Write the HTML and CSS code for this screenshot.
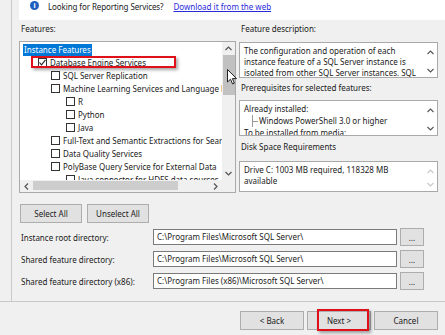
FILE: index.html
```html
<html>
<head>
    <title>Feature Selection</title>
    <link rel="stylesheet" href="styles.css">
</head>
<body>
    <div class="frame">
        <div class="content">
            <!-- Reporting services banner -->
            <div class="banner">
                <span class="info">i</span>
                <span class="banner-text">Looking for Reporting Services?</span>
                <a class="link">Download it from the web</a>
            </div>

            <div class="columns">
                <!-- Feature tree -->
                <div class="left">
                    <div class="label">Features:</div>
                    <div class="tree box">
                        <div class="tree-body">
                            <div class="row"><span class="sel">Instance Features</span></div>
                            <div class="row lvl1"><span class="cb checked"><svg width="7" height="7" viewBox="0 0 7 7"><polyline points="0.5,3.5 2.5,5.8 6.5,0.8" fill="none" stroke="#222" stroke-width="1.1"/></svg></span>Database Engine Services</div>
                            <div class="row lvl2"><span class="cb"></span>SQL Server Replication</div>
                            <div class="row lvl2"><span class="cb"></span>Machine Learning Services and Language Extensions</div>
                            <div class="row lvl3"><span class="cb"></span>R</div>
                            <div class="row lvl3"><span class="cb"></span>Python</div>
                            <div class="row lvl3"><span class="cb"></span>Java</div>
                            <div class="row lvl2"><span class="cb"></span>Full-Text and Semantic Extractions for Search</div>
                            <div class="row lvl2"><span class="cb"></span>Data Quality Services</div>
                            <div class="row lvl2"><span class="cb"></span>PolyBase Query Service for External Data</div>
                            <div class="row lvl3"><span class="cb"></span>Java connector for HDFS data sources</div>
                        </div>
                        <div class="vscroll">
                            <span class="arrow"><svg width="7" height="5" viewBox="0 0 7 5"><polyline points="0.5,4 3.5,1 6.5,4" fill="none" stroke="#555" stroke-width="1.2"/></svg></span>
                            <div class="vthumb"></div>
                            <span class="arrow bottom"><svg width="7" height="5" viewBox="0 0 7 5"><polyline points="0.5,1 3.5,4 6.5,1" fill="none" stroke="#555" stroke-width="1.2"/></svg></span>
                        </div>
                        <div class="hscroll">
                            <span class="harrow"><svg width="5" height="7" viewBox="0 0 5 7"><polyline points="4,0.5 1,3.5 4,6.5" fill="none" stroke="#555" stroke-width="1.2"/></svg></span>
                            <div class="hthumb"></div>
                            <span class="harrow"><svg width="5" height="7" viewBox="0 0 5 7"><polyline points="1,0.5 4,3.5 1,6.5" fill="none" stroke="#555" stroke-width="1.2"/></svg></span>
                        </div>
                        <div class="corner"></div>
                    </div>
                </div>

                <!-- Description panels -->
                <div class="right">
                    <div class="label">Feature description:</div>
                    <div class="box info-box desc">
                        <div class="box-text">The configuration and operation of each<br>instance feature of a SQL Server instance is<br>isolated from other SQL Server instances. SQL</div>
                        <div class="mini-scroll">
                            <svg width="7" height="5" viewBox="0 0 7 5"><polyline points="0.5,4 3.5,1 6.5,4" fill="none" stroke="#555" stroke-width="1.1"/></svg>
                            <svg width="7" height="5" viewBox="0 0 7 5"><polyline points="0.5,1 3.5,4 6.5,1" fill="none" stroke="#555" stroke-width="1.1"/></svg>
                        </div>
                    </div>
                    <div class="label mid">Prerequisites for selected features:</div>
                    <div class="box info-box prereq">
                        <div class="box-text">
                            <div>Already installed:</div>
                            <div class="branch">Windows PowerShell 3.0 or higher</div>
                            <div>To be installed from media:</div>
                        </div>
                        <div class="mini-scroll">
                            <svg width="7" height="5" viewBox="0 0 7 5"><polyline points="0.5,4 3.5,1 6.5,4" fill="none" stroke="#555" stroke-width="1.1"/></svg>
                            <svg width="7" height="5" viewBox="0 0 7 5"><polyline points="0.5,1 3.5,4 6.5,1" fill="none" stroke="#555" stroke-width="1.1"/></svg>
                        </div>
                    </div>
                    <div class="label disk-label">Disk Space Requirements</div>
                    <div class="box info-box disk">
                        <div class="box-text">Drive C: 1003 MB required, 118328 MB<br>available</div>
                        <div class="mini-scroll">
                            <svg width="7" height="5" viewBox="0 0 7 5"><polyline points="0.5,4 3.5,1 6.5,4" fill="none" stroke="#c8c8c8" stroke-width="1.1"/></svg>
                            <svg width="7" height="5" viewBox="0 0 7 5"><polyline points="0.5,1 3.5,4 6.5,1" fill="none" stroke="#c8c8c8" stroke-width="1.1"/></svg>
                        </div>
                    </div>
                </div>
            </div>

            <div class="select-buttons">
                <button>Select All</button>
                <button>Unselect All</button>
            </div>

            <!-- Directories -->
            <div class="dirs">
                <label>Instance root directory:</label>
                <div class="field">C:\Program Files\Microsoft SQL Server\</div>
                <button class="browse">...</button>
                <label>Shared feature directory:</label>
                <div class="field">C:\Program Files\Microsoft SQL Server\</div>
                <button class="browse">...</button>
                <label>Shared feature directory (x86):</label>
                <div class="field">C:\Program Files (x86)\Microsoft SQL Server\</div>
                <button class="browse">...</button>
            </div>
        </div>
    </div>

    <div class="footer">
        <button>&lt; Back</button>
        <button>Next &gt;</button>
        <button>Cancel</button>
    </div>

    <!-- Annotations -->
    <div class="mark mark-engine"></div>
    <div class="mark mark-next"></div>
    <svg class="cursor" width="11" height="17" viewBox="0 0 11 17"><path d="M0.5,0.5 L0.5,13 L3.5,10.2 L5.6,15 L7.4,14.2 L5.4,9.6 L9.5,9.6 Z" fill="#fff" stroke="#222" stroke-width="1"/></svg>
</body>
</html>
```

FILE: styles.css
```css
body {
    margin: 0;
    width: 445px;
    height: 335px;
    overflow: hidden;
    background-color: #f0f0f0;
    font-family: 'Noto Sans', sans-serif;
    font-size: 8px;
    color: #1a1a1a;
    position: relative;
}

.frame {
    height: 302px;
    box-sizing: border-box;
    padding-left: 11px;
    border-bottom: 1px solid #c9c9c9;
}

.content {
    height: 100%;
    border-left: 1px solid #c9c9c9;
    padding-left: 7px;
    padding-right: 7px;
}

.banner {
    height: 20px;
    margin-right: -7px;
    background-color: #ffffff;
    display: flex;
    align-items: flex-start;
    padding-top: 1px;
    box-sizing: border-box;
}

.info {
    width: 9px;
    height: 9px;
    margin-left: 11px;
    border-radius: 50%;
    background-color: #1f5fbf;
    color: #ffffff;
    font-weight: bold;
    font-size: 7px;
    line-height: 9px;
    text-align: center;
}

.banner-text {
    margin-left: 9px;
    line-height: 11px;
    letter-spacing: -0.1px;
}

.link {
    margin-left: 10px;
    line-height: 11px;
    color: #2b2bd9;
    text-decoration: underline;
}

.columns {
    display: grid;
    grid-template-columns: 217px 199px;
    gap: 3px;
}

.label {
    height: 12px;
    line-height: 12px;
    padding-top: 3px;
    margin-bottom: 6px;
    padding-left: 2px;
}

.right .label {
    margin-bottom: 7px;
}

.box {
    border: 1px solid #a9a9a9;
    background-color: #ffffff;
    box-sizing: border-box;
}

/* Tree */
.tree {
    height: 152px;
    display: grid;
    grid-template-columns: 1fr 13px;
    grid-template-rows: 1fr 12px;
}

.tree-body {
    overflow: hidden;
    white-space: nowrap;
    padding-top: 1px;
    padding-left: 3px;
}

.row {
    height: 13px;
    line-height: 12px;
    display: flex;
    align-items: center;
}

.sel {
    background-color: #0078d7;
    color: #ffffff;
    padding: 0 1px;
    height: 12px;
}

.lvl1 { padding-left: 15px; }
.lvl2 { padding-left: 28px; }
.lvl3 { padding-left: 43px; }

.cb {
    width: 7px;
    height: 7px;
    border: 1px solid #333333;
    background-color: #ffffff;
    margin-right: 3px;
    flex: none;
    display: flex;
    align-items: center;
    justify-content: center;
}

.vscroll {
    background-color: #f0f0f0;
    display: flex;
    flex-direction: column;
    align-items: center;
}

.arrow {
    height: 13px;
    display: flex;
    align-items: center;
}

.arrow.bottom {
    margin-top: auto;
}

.vthumb {
    width: 12px;
    height: 40px;
    background-color: #c1c1c1;
}

.hscroll {
    background-color: #f0f0f0;
    display: flex;
    align-items: center;
}

.harrow {
    width: 13px;
    display: flex;
    justify-content: center;
}

.hthumb {
    width: 145px;
    height: 9px;
    margin-top: -2px;
    background-color: #cdcdcd;
}

.hthumb + .harrow {
    margin-left: auto;
}

.corner {
    background-color: #f0f0f0;
}

/* Info boxes */
.info-box {
    display: flex;
    overflow: hidden;
}

.box-text {
    flex: 1;
    padding: 2px 0 0 4px;
    line-height: 11px;
    white-space: nowrap;
    overflow: hidden;
}

.desc { height: 36px; }
.prereq { height: 36px; }
.disk { height: 31px; }

.prereq .box-text {
    line-height: 12px;
    padding-top: 2px;
}

.branch {
    margin-left: 8px;
    padding-left: 6px;
    border-left: 1px solid #999999;
    position: relative;
}

.branch::before {
    content: "";
    position: absolute;
    left: 0;
    top: 6px;
    width: 5px;
    border-top: 1px solid #999999;
}

.mini-scroll {
    width: 13px;
    display: flex;
    flex-direction: column;
    justify-content: space-between;
    align-items: center;
    padding: 7px 0 4px;
}

.right .label.mid {
    padding-top: 4px;
    margin-bottom: 6px;
}

.right .label.disk-label {
    padding-top: 5px;
    margin-bottom: 8px;
}

/* Buttons */
button {
    font-family: 'Noto Sans', sans-serif;
    font-size: 8px;
    color: #1a1a1a;
    background-color: #e1e1e1;
    border: 1px solid #adadad;
    height: 19px;
    padding: 0;
    margin: 0;
}

.select-buttons {
    display: flex;
    gap: 5px;
    margin-top: 11px;
    margin-left: 1px;
}

.select-buttons button {
    width: 62px;
}

.dirs {
    display: grid;
    grid-template-columns: 131px 244px 24px;
    column-gap: 3px;
    row-gap: 4px;
    margin-top: 5px;
    align-items: center;
}

.dirs label {
    padding-left: 2px;
}

.field {
    height: 16px;
    line-height: 14px;
    box-sizing: border-box;
    border: 1px solid #7a7a7a;
    background-color: #ffffff;
    padding-left: 3px;
    white-space: nowrap;
    overflow: hidden;
}

.browse {
    height: 18px;
}

.footer {
    display: flex;
    justify-content: flex-end;
    gap: 3px;
    padding: 9px 7px 0 0;
}

.footer button {
    width: 64px;
}

/* Annotations drawn over the screenshot */
.mark {
    position: absolute;
    border: 2px solid #e0101a;
    box-shadow: 2px 2px 3px rgba(0, 0, 0, 0.35);
    box-sizing: border-box;
}

.mark-engine {
    left: 31px;
    top: 56px;
    width: 145px;
    height: 12px;
}

.mark-next {
    left: 317px;
    top: 309px;
    width: 52px;
    height: 22px;
}

.cursor {
    position: absolute;
    left: 227px;
    top: 69px;
}
```
